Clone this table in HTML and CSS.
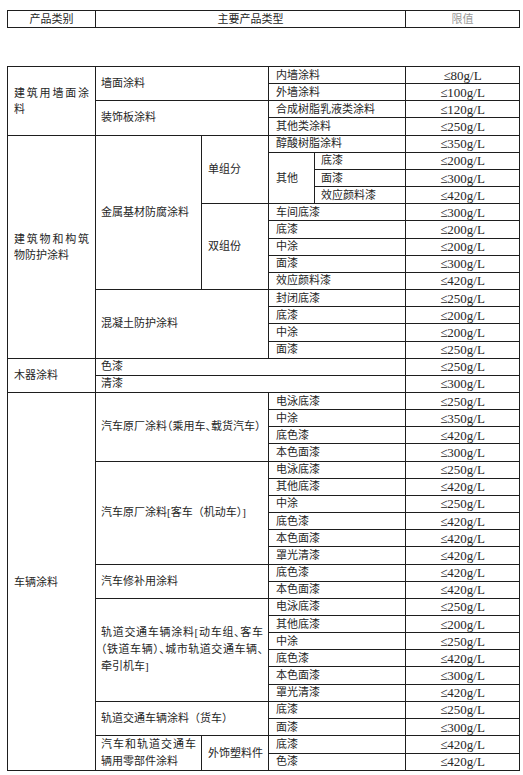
FILE: index.html
```html
<!DOCTYPE html>
<html lang="zh-CN">
<head>
<meta charset="utf-8">
<link rel="stylesheet" href="styles.css">
</head>
<body>
<table class="head">
  <colgroup><col class="h1"><col class="h2"><col class="h3"></colgroup>
  <tr><td>产品类别</td><td>主要产品类型</td><td class="faint">限值</td></tr>
</table>
<table class="main">
  <colgroup>
    <col class="ca"><col class="cb"><col class="cc"><col class="cd"><col class="ce"><col class="cf">
  </colgroup>
  <tr><td rowspan="4" class="cat just">建筑用墙面涂料</td><td colspan="2" rowspan="2" class="b">墙面涂料</td><td colspan="2" class="d">内墙涂料</td><td class="v">≤80g/L</td></tr>
  <tr><td colspan="2" class="d">外墙涂料</td><td class="v">≤100g/L</td></tr>
  <tr><td colspan="2" rowspan="2" class="b">装饰板涂料</td><td colspan="2" class="d">合成树脂乳液类涂料</td><td class="v">≤120g/L</td></tr>
  <tr><td colspan="2" class="d">其他类涂料</td><td class="v">≤250g/L</td></tr>

  <tr><td rowspan="13" class="cat just">建筑物和构筑物防护涂料</td><td rowspan="9" class="b">金属基材防腐涂料</td><td rowspan="4" class="c">单组分</td><td colspan="2" class="d">醇酸树脂涂料</td><td class="v">≤350g/L</td></tr>
  <tr><td rowspan="3" class="d">其他</td><td class="e">底漆</td><td class="v">≤200g/L</td></tr>
  <tr><td class="e">面漆</td><td class="v">≤300g/L</td></tr>
  <tr><td class="e">效应颜料漆</td><td class="v">≤420g/L</td></tr>
  <tr><td rowspan="5" class="c">双组份</td><td colspan="2" class="d">车间底漆</td><td class="v">≤300g/L</td></tr>
  <tr><td colspan="2" class="d">底漆</td><td class="v">≤200g/L</td></tr>
  <tr><td colspan="2" class="d">中涂</td><td class="v">≤200g/L</td></tr>
  <tr><td colspan="2" class="d">面漆</td><td class="v">≤300g/L</td></tr>
  <tr><td colspan="2" class="d">效应颜料漆</td><td class="v">≤420g/L</td></tr>
  <tr><td colspan="2" rowspan="4" class="b">混凝土防护涂料</td><td colspan="2" class="d">封闭底漆</td><td class="v">≤250g/L</td></tr>
  <tr><td colspan="2" class="d">底漆</td><td class="v">≤200g/L</td></tr>
  <tr><td colspan="2" class="d">中涂</td><td class="v">≤200g/L</td></tr>
  <tr><td colspan="2" class="d">面漆</td><td class="v">≤250g/L</td></tr>

  <tr><td rowspan="2" class="cat">木器涂料</td><td colspan="4" class="b">色漆</td><td class="v">≤250g/L</td></tr>
  <tr><td colspan="4" class="b">清漆</td><td class="v">≤300g/L</td></tr>

  <tr><td rowspan="22" class="cat">车辆涂料</td><td colspan="2" rowspan="4" class="b nowrap halt">汽车原厂涂料（乘用车、载货汽车）</td><td colspan="2" class="d">电泳底漆</td><td class="v">≤250g/L</td></tr>
  <tr><td colspan="2" class="d">中涂</td><td class="v">≤350g/L</td></tr>
  <tr><td colspan="2" class="d">底色漆</td><td class="v">≤420g/L</td></tr>
  <tr><td colspan="2" class="d">本色面漆</td><td class="v">≤300g/L</td></tr>
  <tr><td colspan="2" rowspan="6" class="b">汽车原厂涂料[客车（机动车）]</td><td colspan="2" class="d">电泳底漆</td><td class="v">≤250g/L</td></tr>
  <tr><td colspan="2" class="d">其他底漆</td><td class="v">≤420g/L</td></tr>
  <tr><td colspan="2" class="d">中涂</td><td class="v">≤250g/L</td></tr>
  <tr><td colspan="2" class="d">底色漆</td><td class="v">≤420g/L</td></tr>
  <tr><td colspan="2" class="d">本色面漆</td><td class="v">≤420g/L</td></tr>
  <tr><td colspan="2" class="d">罩光清漆</td><td class="v">≤420g/L</td></tr>
  <tr><td colspan="2" rowspan="2" class="b">汽车修补用涂料</td><td colspan="2" class="d">底色漆</td><td class="v">≤420g/L</td></tr>
  <tr><td colspan="2" class="d">本色面漆</td><td class="v">≤420g/L</td></tr>
  <tr><td colspan="2" rowspan="6" class="b just multi halt">轨道交通车辆涂料[动车组、客车（铁道车辆）、城市轨道交通车辆、牵引机车]</td><td colspan="2" class="d">电泳底漆</td><td class="v">≤250g/L</td></tr>
  <tr><td colspan="2" class="d">其他底漆</td><td class="v">≤200g/L</td></tr>
  <tr><td colspan="2" class="d">中涂</td><td class="v">≤250g/L</td></tr>
  <tr><td colspan="2" class="d">底色漆</td><td class="v">≤420g/L</td></tr>
  <tr><td colspan="2" class="d">本色面漆</td><td class="v">≤300g/L</td></tr>
  <tr><td colspan="2" class="d">罩光清漆</td><td class="v">≤420g/L</td></tr>
  <tr><td colspan="2" rowspan="2" class="b">轨道交通车辆涂料（货车）</td><td colspan="2" class="d">底漆</td><td class="v">≤250g/L</td></tr>
  <tr><td colspan="2" class="d">面漆</td><td class="v">≤300g/L</td></tr>
  <tr><td rowspan="2" class="b just multi">汽车和轨道交通车辆用零部件涂料</td><td rowspan="2" class="c">外饰塑料件</td><td colspan="2" class="d">底漆</td><td class="v">≤420g/L</td></tr>
  <tr><td colspan="2" class="d">色漆</td><td class="v">≤420g/L</td></tr>
</table>
</body>
</html>
```
FILE: styles.css
```css
html, body {
  background: #ffffff;
}
body {
  margin: 10px 0 0 7px;
  font-family: "Liberation Serif", "Noto Sans CJK SC", serif;
  font-size: 11px;
  color: #262626;
}
table {
  border-collapse: collapse;
  table-layout: fixed;
  width: 512px;
}
td {
  border: 1px solid #1e1e1e;
  padding: 0 5px;
  line-height: 15px;
  vertical-align: middle;
  white-space: normal;
  overflow: hidden;
}
.head {
  margin-bottom: 38px;
}
.head td {
  height: 16px;
  text-align: center;
  padding: 0;
}
.head .faint {
  color: #9a9a9a;
}
col.h1 { width: 88px; }
col.h2 { width: 310px; }
col.h3 { width: 114px; }

col.ca { width: 88px; }
col.cb { width: 106px; }
col.cc { width: 67px; }
col.cd { width: 46px; }
col.ce { width: 91px; }
col.cf { width: 114px; }

.main tr {
  height: 17.17px;
}
.cat {
  padding-left: 6px;
  padding-right: 6px;
  line-height: 16px;
}
.just {
  text-align: justify;
}
.multi {
  line-height: 17px;
}
.b { padding-left: 5px; }
.c { padding-left: 6px; }
.d { padding-left: 7px; }
.e { padding-left: 6px; }
.v {
  text-align: center;
  font-size: 13px;
  padding: 0;
}
.nowrap {
  white-space: nowrap;
}
.halt {
  font-feature-settings: "halt" 1;
}
```
